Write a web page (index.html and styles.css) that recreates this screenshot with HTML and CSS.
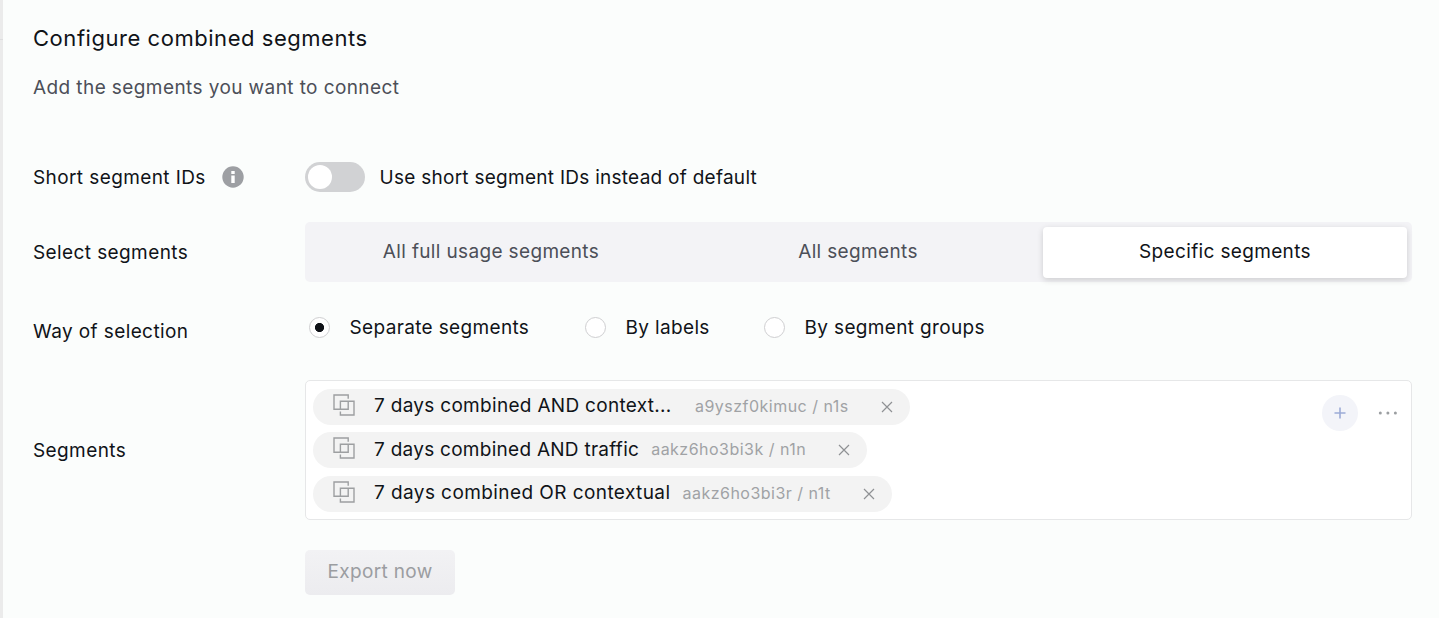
FILE: index.html
```html
<!DOCTYPE html>
<html lang="en">
<head>
  <meta charset="UTF-8">
  <meta name="viewport" content="width=device-width, initial-scale=1.0">
  <title>Configure combined segments</title>
  <link rel="stylesheet" href="styles.css">
</head>
<body>

  <svg width="0" height="0" class="sprite">
    <symbol id="icon-combined" viewBox="0 0 22 22">
      <path d="M15.2 4.8V1H1v14.2h14.2V7.4M7.4 17.4V21H21V7.2H7.4v7.8" fill="none" stroke="currentColor" stroke-width="1.4"/>
    </symbol>
    <symbol id="icon-close" viewBox="0 0 12 12">
      <path d="M1 1l10 10M11 1L1 11" fill="none" stroke="currentColor" stroke-width="1.2"/>
    </symbol>
  </svg>

  <main class="panel">
    <h1>Configure combined segments</h1>
    <p class="subtitle">Add the segments you want to connect</p>

    <div class="row row-short">
      <div class="label">
        <span>Short segment IDs</span>
        <svg class="info" width="22" height="22" viewBox="0 0 22 22">
          <circle cx="11" cy="11" r="10.7" fill="#9d9fa3"/>
          <path d="M9.3 5h3.4v3H9.3zM9.3 9.6h3.4V17H9.3z" fill="#fff"/>
        </svg>
      </div>
      <div class="field">
        <span class="toggle"></span>
        <span class="toggle-text">Use short segment IDs instead of default</span>
      </div>
    </div>

    <div class="row row-select">
      <div class="label"><span>Select segments</span></div>
      <div class="tabs">
        <button class="tab">All full usage segments</button>
        <button class="tab">All segments</button>
        <button class="tab active">Specific segments</button>
      </div>
    </div>

    <div class="row row-way">
      <div class="label"><span>Way of selection</span></div>
      <div class="radios">
        <label class="radio radio-separate"><span class="dot checked"></span><span>Separate segments</span></label>
        <label class="radio radio-labels"><span class="dot"></span><span>By labels</span></label>
        <label class="radio"><span class="dot"></span><span>By segment groups</span></label>
      </div>
    </div>

    <div class="row row-segments">
      <div class="label"><span>Segments</span></div>
      <div class="segments">
        <div class="chips">
          <div class="chip">
            <svg class="combined" width="22" height="22"><use href="#icon-combined"/></svg>
            <span class="name name-cut">7 days combined AND context...</span>
            <span class="id">a9yszf0kimuc / n1s</span>
            <svg class="close" width="12" height="12"><use href="#icon-close"/></svg>
          </div>
          <div class="chip">
            <svg class="combined" width="22" height="22"><use href="#icon-combined"/></svg>
            <span class="name name-mid">7 days combined AND traffic</span>
            <span class="id">aakz6ho3bi3k / n1n</span>
            <svg class="close" width="12" height="12"><use href="#icon-close"/></svg>
          </div>
          <div class="chip">
            <svg class="combined" width="22" height="22"><use href="#icon-combined"/></svg>
            <span class="name name-wide">7 days combined OR contextual</span>
            <span class="id">aakz6ho3bi3r / n1t</span>
            <svg class="close" width="12" height="12"><use href="#icon-close"/></svg>
          </div>
        </div>
        <div class="actions">
          <button class="add">
            <svg width="12" height="12" viewBox="0 0 12 12"><path d="M6 .5v11M.5 6h11" stroke="#9cabd6" stroke-width="1.6"/></svg>
          </button>
          <svg class="more" width="20" height="4" viewBox="0 0 20 4" fill="#9b9ea1">
            <circle cx="2.3" cy="2" r="1.5"/><circle cx="9.9" cy="2" r="1.5"/><circle cx="17.4" cy="2" r="1.5"/>
          </svg>
        </div>
      </div>
    </div>

    <button class="export">Export now</button>
  </main>

</body>
</html>
```

FILE: styles.css
```css
* {
  box-sizing: border-box;
}

body {
  margin: 0;
  background: #fbfdfc;
  color: #101318;
  font-family: Inter, "Liberation Sans", sans-serif;
  font-size: 19px;
  font-weight: 400;
  line-height: 28px;
  letter-spacing: 0.35px;
}

button {
  border: none;
  padding: 0;
  font: inherit;
  letter-spacing: inherit;
}

.sprite {
  display: block;
}

.panel {
  position: relative;
  height: 618px;
  padding: 24px 27px 0 30px;
  border-left: 3px solid #ebebeb;
}

.panel::before {
  content: "";
  position: absolute;
  top: 39px;
  left: -3px;
  width: 3px;
  height: 1px;
  background: #dededf;
}

h1 {
  margin: 0;
  font-size: 22px;
  font-weight: 400;
  line-height: 28px;
  letter-spacing: 0.54px;
}

.subtitle {
  margin: 22px 0 60px;
  color: #4c4f58;
  letter-spacing: 0.41px;
}

.row {
  display: flex;
  align-items: center;
}

.label {
  flex: 0 0 272px;
  display: flex;
  align-items: center;
  letter-spacing: 0.4px;
}

.label span {
  padding-top: 2px;
}

.info {
  margin-left: 16px;
}

.row-short {
  height: 30px;
  margin-bottom: 30px;
}

.field {
  display: flex;
  align-items: center;
}

.toggle {
  width: 60px;
  height: 30px;
  padding: 3px;
  margin-right: 14.5px;
  border-radius: 15px;
  background: #d1d2d4;
}

.toggle::before {
  content: "";
  display: block;
  width: 24px;
  height: 24px;
  border-radius: 50%;
  background: #fff;
}

.toggle-text {
  padding-top: 2px;
  letter-spacing: 0.27px;
}

.row-select {
  height: 60px;
  margin-bottom: 30px;
}

.tabs {
  flex: 1;
  display: grid;
  grid-template-columns: repeat(3, 1fr);
  gap: 3px;
  height: 60px;
  padding: 5px 5px 4px 4px;
  border-radius: 5px;
  background: #f3f3f6;
}

.tab {
  padding-bottom: 2px;
  border-radius: 4px;
  background: none;
  color: #4c4f58;
}

.tab.active {
  background: #fff;
  color: #101318;
  box-shadow: 0 2px 6px rgba(0, 0, 0, 0.16);
}

.row-way {
  height: 38px;
  margin-bottom: 30px;
}

.radios {
  display: flex;
  padding: 0 0 7px 4px;
}

.radio {
  display: flex;
  align-items: center;
  gap: 19.5px;
}

.radio-separate {
  width: 276px;
}

.radio-labels {
  width: 179px;
}

.dot {
  width: 21px;
  height: 21px;
  border: 1px solid #cfcfd1;
  border-radius: 50%;
  background: #fff;
}

.dot.checked {
  background: radial-gradient(circle, #101318 4.2px, #fff 5px);
}

.row-segments {
  height: 140px;
}

.segments {
  flex: 1;
  display: flex;
  justify-content: space-between;
  height: 140px;
  padding: 8px 13px 0 7px;
  border: 1px solid #e6e7e8;
  border-radius: 5px;
  background: #fff;
}

.chips {
  display: flex;
  flex-direction: column;
  align-items: flex-start;
  gap: 7.4px;
}

.chip {
  display: flex;
  align-items: center;
  height: 36px;
  padding: 0 17px 0 20px;
  border-radius: 18px;
  background: #f3f3f3;
}

.combined {
  margin: -4px 19px 0 0;
  color: #9d9fa1;
}

.name {
  margin: -2px 12px 0 0;
  letter-spacing: 0.3px;
}

.name-cut {
  width: 309px;
}

.name-mid {
  margin-top: -1px;
  letter-spacing: 0.27px;
}

.name-wide {
  letter-spacing: 0.42px;
}

.id {
  margin: -2px 32px 0 0;
  color: #a0a2a5;
  font-size: 16px;
  letter-spacing: 0.48px;
}

.close {
  color: #8f9194;
}

.actions {
  display: flex;
  align-items: center;
  height: 36px;
  margin-top: 6px;
}

.add {
  display: flex;
  align-items: center;
  justify-content: center;
  width: 36px;
  height: 36px;
  margin-right: 20px;
  border-radius: 50%;
  background: #f3f4f9;
}

.export {
  display: block;
  width: 150px;
  height: 45px;
  margin: 30px 0 0 272px;
  padding-bottom: 2px;
  border-radius: 5px;
  background: linear-gradient(#f2f2f4, #ececef);
  color: #9b9da1;
}
```
